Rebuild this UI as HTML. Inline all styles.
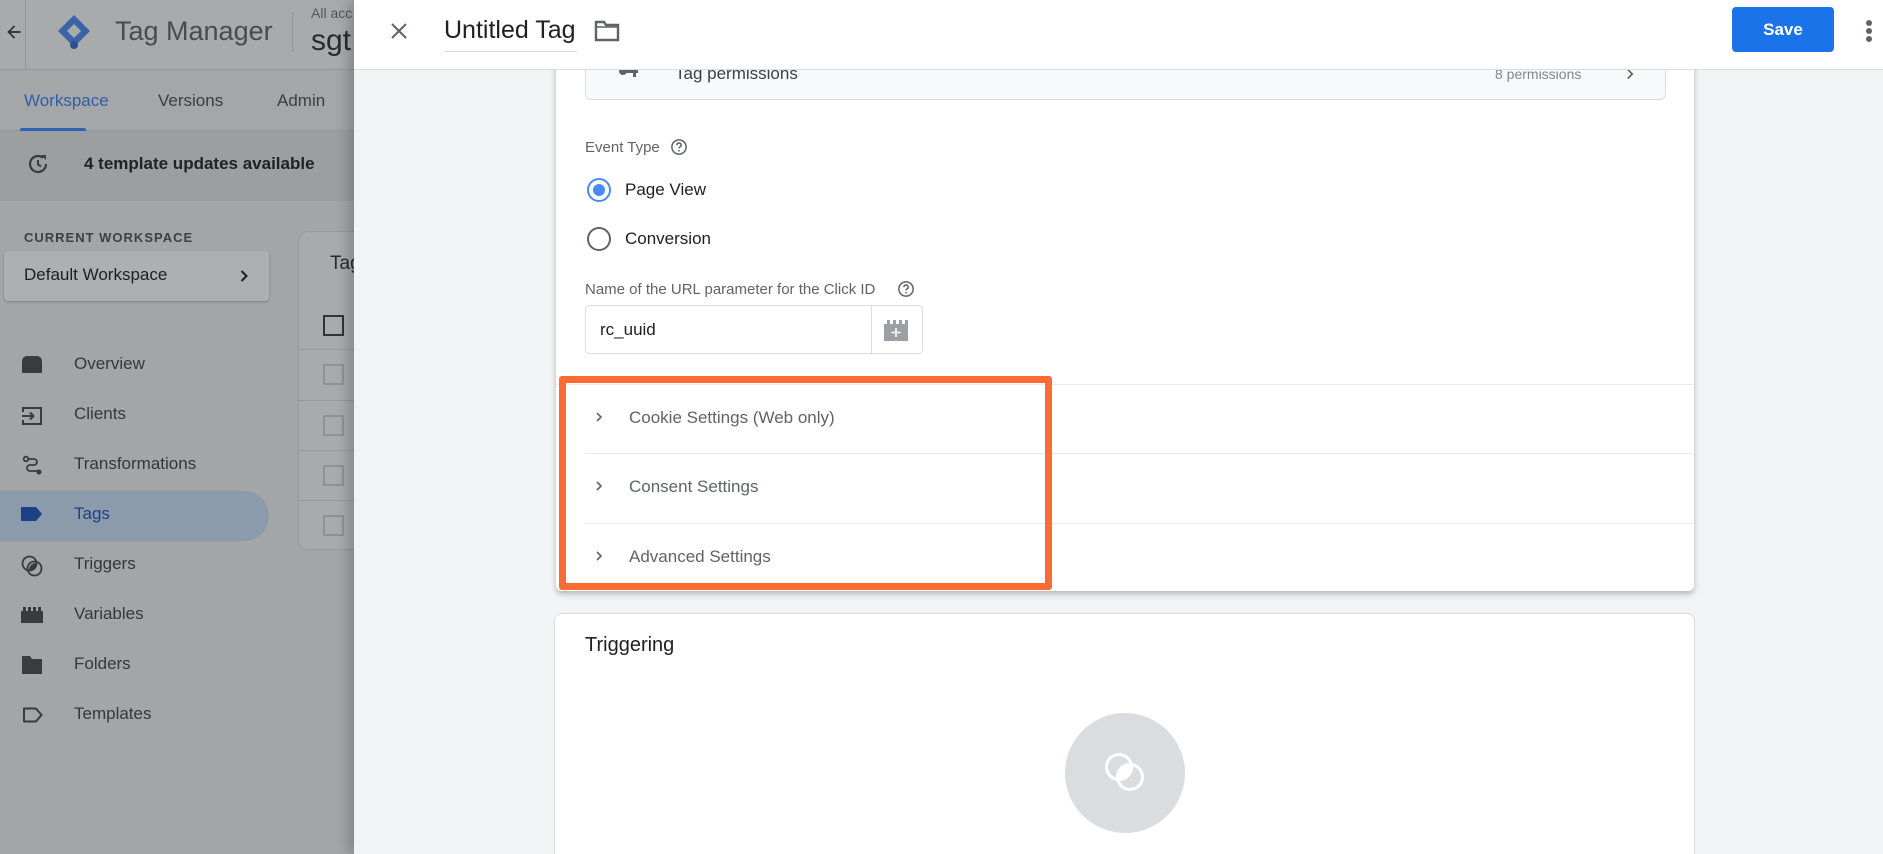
<!DOCTYPE html>
<html><head><meta charset="utf-8"><style>
*{box-sizing:border-box;margin:0;padding:0}
html,body{width:1883px;height:854px;overflow:hidden}
body{position:relative;font-family:"Liberation Sans",Arial,sans-serif;background:#a4a5a7}
.a{position:absolute}
.t{position:absolute;white-space:nowrap}
</style></head><body>
<div class="a" style="left:0;top:0;width:354px;height:70px;background:#a9aaab;border-bottom:1px solid #979899"></div>
<div class="a" style="left:25px;top:0;width:1px;height:70px;background:#959698"></div>
<svg class="a" style="left:4px;top:22px" width="20" height="20" viewBox="0 0 24 24"><path d="M20 11H7.8l5.6-5.6L12 4l-8 8 8 8 1.4-1.4L7.8 13H20z" fill="#2a2b2d"/></svg>
<svg class="a" style="left:54px;top:12px" width="40" height="40" viewBox="0 0 40 40"><path d="M20 3 L36 19 L20 35 L4 19Z" fill="#3b63a8"/><path d="M20 12 L27 19 L20 26 L13 19Z" fill="#a9aaab"/><circle cx="20" cy="33" r="4" fill="#2c4f8e"/></svg>
<div class="t" style="left:115px;top:16px;font-size:27px;color:#4a4b4d">Tag Manager</div>
<div class="a" style="left:292px;top:12px;width:1px;height:40px;background:#959698"></div>
<div class="t" style="left:311px;top:5px;font-size:14px;color:#555">All acc</div>
<div class="t" style="left:311px;top:24px;font-size:30px;color:#2a2b2d">sgt</div>
<div class="a" style="left:0;top:70px;width:354px;height:61px;background:#a5a6a8;border-bottom:1px solid #959698"></div>
<div class="t" style="left:24px;top:91px;font-size:17px;color:#2f5ea8">Workspace</div>
<div class="a" style="left:20px;top:128px;width:66px;height:3px;background:#2f62b5;border-radius:2px 2px 0 0"></div>
<div class="t" style="left:158px;top:91px;font-size:17px;color:#3c3d3f">Versions</div>
<div class="t" style="left:277px;top:91px;font-size:17px;color:#3c3d3f">Admin</div>
<div class="a" style="left:0;top:131px;width:354px;height:70px;background:#9d9ea0"></div>
<svg class="a" style="left:26px;top:152px" width="24" height="24" viewBox="0 0 24 24"><path d="M20 12a8 8 0 1 1-3-6.2" fill="none" stroke="#3a3b3d" stroke-width="2.2"/><path d="M15 3h5v5z" fill="#3a3b3d"/><path d="M12 8v4.5l3 2" fill="none" stroke="#3a3b3d" stroke-width="2"/></svg>
<div class="t" style="left:84px;top:154px;font-size:17px;font-weight:bold;color:#222">4 template updates available</div>
<div class="t" style="left:24px;top:230px;font-size:13px;font-weight:bold;letter-spacing:1px;color:#3e3f41">CURRENT WORKSPACE</div>
<div class="a" style="left:4px;top:251px;width:265px;height:50px;background:#aeafb0;border-radius:4px;box-shadow:0 1px 2px rgba(0,0,0,.25)"></div>
<div class="t" style="left:24px;top:265px;font-size:17px;color:#1e1f21">Default Workspace</div>
<svg class="a" style="left:234px;top:266px" width="20" height="20" viewBox="0 0 24 24"><path d="M9 6l6 6-6 6" fill="none" stroke="#1e1f21" stroke-width="2.4"/></svg>
<div class="a" style="left:298px;top:231px;width:70px;height:319px;background:#a9aaac;border-radius:10px 0 0 10px;border:1px solid #999a9c"></div>
<div class="t" style="left:330px;top:253px;font-size:19px;color:#2a2b2d">Tag</div>
<div class="a" style="left:323px;top:315px;width:21px;height:21px;border:2px solid #333"></div>
<div class="a" style="left:299px;top:349px;width:60px;height:1px;background:#98999b"></div>
<div class="a" style="left:323px;top:364px;width:21px;height:21px;border:2px solid #909193"></div>
<div class="a" style="left:299px;top:400px;width:60px;height:1px;background:#98999b"></div>
<div class="a" style="left:323px;top:415px;width:21px;height:21px;border:2px solid #909193"></div>
<div class="a" style="left:299px;top:450px;width:60px;height:1px;background:#98999b"></div>
<div class="a" style="left:323px;top:465px;width:21px;height:21px;border:2px solid #909193"></div>
<div class="a" style="left:299px;top:500px;width:60px;height:1px;background:#98999b"></div>
<div class="a" style="left:323px;top:515px;width:21px;height:21px;border:2px solid #909193"></div>
<div class="a" style="left:0;top:491px;width:269px;height:50px;background:#8c9bab;border-radius:0 25px 25px 0"></div>
<div class="a" style="left:22px;top:356px;width:20px;height:17px;background:#3a3b3d;border-radius:5px 5px 1px 1px"></div>
<div class="t" style="left:74px;top:354px;font-size:17px;color:#36373a">Overview</div>
<svg class="a" style="left:21px;top:405px" width="22" height="22" viewBox="0 0 22 22"><path d="M2 7V3h18v16H2v-4" fill="none" stroke="#3a3b3d" stroke-width="2"/><path d="M1 11h11M9 7.5l3.5 3.5L9 14.5" fill="none" stroke="#3a3b3d" stroke-width="2"/></svg>
<div class="t" style="left:74px;top:404px;font-size:17px;color:#36373a">Clients</div>
<svg class="a" style="left:22px;top:455px" width="22" height="22" viewBox="0 0 22 22"><circle cx="4" cy="4" r="2.3" fill="none" stroke="#3a3b3d" stroke-width="1.8"/><circle cx="17" cy="17" r="2.5" fill="#3a3b3d"/><path d="M6 4h6a3 3 0 0 1 0 6H8a3 3 0 0 0 0 6h7" fill="none" stroke="#3a3b3d" stroke-width="1.8"/></svg>
<div class="t" style="left:74px;top:454px;font-size:17px;color:#36373a">Transformations</div>
<svg class="a" style="left:21px;top:506px" width="22" height="16" viewBox="0 0 22 16"><path d="M0 1h15l6 7-6 7H0z" fill="#1d3f86"/></svg>
<div class="t" style="left:74px;top:504px;font-size:17px;color:#1d3f86">Tags</div>
<svg class="a" style="left:21px;top:555px" width="22" height="22" viewBox="0 0 22 22"><circle cx="8.5" cy="8.5" r="7" fill="none" stroke="#3a3b3d" stroke-width="1.8"/><circle cx="13.5" cy="13.5" r="7" fill="none" stroke="#3a3b3d" stroke-width="1.8"/><path d="M8 15a7 7 0 0 1 7-7 7 7 0 0 1-7 7z" fill="#3a3b3d"/></svg>
<div class="t" style="left:74px;top:554px;font-size:17px;color:#36373a">Triggers</div>
<svg class="a" style="left:21px;top:607px" width="22" height="16" viewBox="0 0 22 16"><path d="M0 4h2V0h3v4h2V0h3v4h2V0h3v4h2V0h3v4h2v12H0z" fill="#3a3b3d"/></svg>
<div class="t" style="left:74px;top:604px;font-size:17px;color:#36373a">Variables</div>
<svg class="a" style="left:22px;top:656px" width="20" height="18" viewBox="0 0 20 18"><path d="M0 0h8l2 3h10v15H0z" fill="#3a3b3d"/></svg>
<div class="t" style="left:74px;top:654px;font-size:17px;color:#36373a">Folders</div>
<svg class="a" style="left:22px;top:707px" width="22" height="16" viewBox="0 0 22 16"><path d="M2 1.5h12l5.5 6.5-5.5 6.5H2z" fill="none" stroke="#3a3b3d" stroke-width="2" stroke-linejoin="round"/></svg>
<div class="t" style="left:74px;top:704px;font-size:17px;color:#36373a">Templates</div>

<div class="a" style="left:354px;top:0;width:1529px;height:854px;background:#f1f3f4;box-shadow:-6px 0 12px rgba(0,0,0,.2)"></div>
<div class="a" style="left:354px;top:0;width:1529px;height:70px;background:#fff;border-bottom:1px solid #dadce0;z-index:2"></div>
<svg class="a" style="left:387px;top:19px;z-index:3" width="24" height="24" viewBox="0 0 24 24"><path d="M5 5l14 14M19 5L5 19" stroke="#5f6368" stroke-width="2"/></svg>
<div class="t" style="left:444px;top:16px;font-size:25px;color:#202124;z-index:3">Untitled Tag</div>
<div class="a" style="left:444px;top:51px;width:133px;height:1px;background:#dadce0;z-index:3"></div>
<svg class="a" style="left:594px;top:19px;z-index:3" width="26" height="24" viewBox="0 0 26 24"><path d="M2 3h8l2 3h12v15H2z" fill="none" stroke="#5f6368" stroke-width="2.4"/><path d="M2 8h22" stroke="#5f6368" stroke-width="1.5"/></svg>
<div class="a" style="left:1732px;top:7px;width:102px;height:45px;background:#1a73e8;border-radius:4px;color:#fff;font-size:17px;font-weight:bold;text-align:center;line-height:45px;z-index:3">Save</div>
<div class="a" style="left:1866px;top:20px;width:6px;height:6px;border-radius:50%;background:#5f6368;z-index:3"></div>
<div class="a" style="left:1866px;top:28px;width:6px;height:6px;border-radius:50%;background:#5f6368;z-index:3"></div>
<div class="a" style="left:1866px;top:36px;width:6px;height:6px;border-radius:50%;background:#5f6368;z-index:3"></div>

<div class="a" style="left:556px;top:60px;width:1138px;height:531px;background:#fff;border-radius:0 0 6px 6px;box-shadow:0 3px 6px rgba(0,0,0,.25)"></div>
<div class="a" style="left:585px;top:50px;width:1081px;height:50px;background:#f8f9fa;border:1px solid #dadce0;border-radius:0 0 6px 6px"></div>
<div class="t" style="left:675px;top:64px;font-size:17px;color:#3c4043">Tag permissions</div>
<svg class="a" style="left:618px;top:66px" width="22" height="14" viewBox="0 0 22 14"><circle cx="5" cy="5" r="4" fill="#5f6368"/><rect x="8" y="3" width="12" height="4" fill="#5f6368"/><rect x="15" y="5" width="3" height="6" fill="#5f6368"/></svg>
<div class="t" style="left:1495px;top:66px;font-size:14px;color:#80868b">8 permissions</div>
<svg class="a" style="left:1621px;top:65px" width="18" height="18" viewBox="0 0 24 24"><path d="M9 6l6 6-6 6" fill="none" stroke="#5f6368" stroke-width="2.2"/></svg>

<div class="t" style="left:585px;top:139px;font-size:15px;color:#5f6368">Event Type</div>
<svg class="a" style="left:670px;top:138px" width="18" height="18" viewBox="0 0 24 24"><circle cx="12" cy="12" r="9.5" fill="none" stroke="#5f6368" stroke-width="2"/><path d="M9.2 9.5a2.8 2.8 0 1 1 3.8 2.6c-.8.4-1 .9-1 1.8" fill="none" stroke="#5f6368" stroke-width="2"/><circle cx="12" cy="17" r="1.2" fill="#5f6368"/></svg>
<div class="a" style="left:587px;top:178px;width:24px;height:24px;border-radius:50%;border:2px solid #4a8af4"></div>
<div class="a" style="left:593px;top:184px;width:12px;height:12px;border-radius:50%;background:#4a8af4"></div>
<div class="t" style="left:625px;top:180px;font-size:17px;color:#202124">Page View</div>
<div class="a" style="left:587px;top:227px;width:24px;height:24px;border-radius:50%;border:2px solid #5f6368"></div>
<div class="t" style="left:625px;top:229px;font-size:17px;color:#202124">Conversion</div>
<div class="t" style="left:585px;top:281px;font-size:15px;color:#5f6368">Name of the URL parameter for the Click ID</div>
<svg class="a" style="left:897px;top:280px" width="18" height="18" viewBox="0 0 24 24"><circle cx="12" cy="12" r="9.5" fill="none" stroke="#5f6368" stroke-width="2"/><path d="M9.2 9.5a2.8 2.8 0 1 1 3.8 2.6c-.8.4-1 .9-1 1.8" fill="none" stroke="#5f6368" stroke-width="2"/><circle cx="12" cy="17" r="1.2" fill="#5f6368"/></svg>
<div class="a" style="left:585px;top:305px;width:338px;height:49px;border:1px solid #dadce0;border-radius:4px"></div>
<div class="a" style="left:871px;top:306px;width:1px;height:47px;background:#dadce0"></div>
<div class="t" style="left:600px;top:320px;font-size:17px;color:#202124">rc_uuid</div>
<svg class="a" style="left:884px;top:319px" width="24" height="22" viewBox="0 0 24 22"><path d="M0 5h3V1h3v4h3V1h3v4h3V1h3v4h3V1h3v4h0v17H0z" fill="#9aa0a6"/><path d="M12 9v9M7.5 13.5h9" stroke="#fff" stroke-width="1.6"/></svg>

<div class="a" style="left:556px;top:384px;width:1138px;height:1px;background:#e8eaed"></div>
<div class="a" style="left:585px;top:453px;width:1109px;height:1px;background:#e8eaed"></div>
<div class="a" style="left:585px;top:523px;width:1109px;height:1px;background:#e8eaed"></div>
<svg class="a" style="left:591px;top:409px" width="16" height="16" viewBox="0 0 24 24"><path d="M9 6l6 6-6 6" fill="none" stroke="#5f6368" stroke-width="2.4"/></svg>
<div class="t" style="left:629px;top:408px;font-size:17px;color:#5f6368">Cookie Settings (Web only)</div>
<svg class="a" style="left:591px;top:478px" width="16" height="16" viewBox="0 0 24 24"><path d="M9 6l6 6-6 6" fill="none" stroke="#5f6368" stroke-width="2.4"/></svg>
<div class="t" style="left:629px;top:477px;font-size:17px;color:#5f6368">Consent Settings</div>
<svg class="a" style="left:591px;top:548px" width="16" height="16" viewBox="0 0 24 24"><path d="M9 6l6 6-6 6" fill="none" stroke="#5f6368" stroke-width="2.4"/></svg>
<div class="t" style="left:629px;top:547px;font-size:17px;color:#5f6368">Advanced Settings</div>
<div class="a" style="left:559px;top:376px;width:493px;height:214px;border:7px solid #fd6b35;border-radius:3px"></div>

<div class="a" style="left:554px;top:613px;width:1141px;height:241px;background:#fff;border:1px solid #dadce0;border-bottom:none;border-radius:8px 8px 0 0"></div>
<div class="t" style="left:585px;top:634px;font-size:20px;color:#202124">Triggering</div>
<div class="a" style="left:1065px;top:713px;width:120px;height:120px;border-radius:50%;background:#dadce0"></div>
<svg class="a" style="left:1097px;top:745px" width="56" height="56" viewBox="0 0 56 56"><circle cx="22" cy="22" r="12.5" fill="none" stroke="#fff" stroke-width="3"/><circle cx="33" cy="32" r="12.5" fill="none" stroke="#fff" stroke-width="3"/><path d="M21.5 33.5A12.5 12.5 0 0 1 33.5 20.5 12.5 12.5 0 0 1 21.5 33.5z" fill="#fff"/></svg>
</body></html>
